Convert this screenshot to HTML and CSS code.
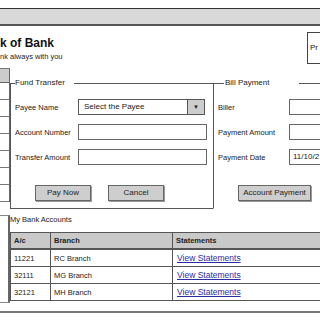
FILE: index.html
```html
<!DOCTYPE html>
<html>
<head>
<meta charset="utf-8">
<link rel="stylesheet" href="styles.css">
</head>
<body>
<div class="page">
  <div class="topbar"></div>
  <div class="header">
    <div class="brand">
      <div class="title">k of Bank</div>
      <div class="tagline">nk always with you</div>
    </div>
    <div class="probox">Pr</div>
  </div>
  <div class="main">
    <div class="sidebar">
      <div class="side-list">
        <div class="side-head"></div>
        <div class="side-row"></div>
        <div class="side-row"></div>
        <div class="side-row"></div>
        <div class="side-row"></div>
        <div class="side-row"></div>
        <div class="side-row"></div>
        <div class="side-row"></div>
      </div>
      <div class="side-box"></div>
    </div>
    <div class="content">
      <div class="forms">
        <fieldset class="panel fund">
          <legend class="legend">Fund Transfer</legend>
          <div class="rows">
            <div class="form-row">
              <span class="label">Payee Name</span>
              <div class="select"><span class="select-text">Select the Payee</span><span class="select-btn">&#9660;</span></div>
            </div>
            <div class="form-row">
              <span class="label">Account Number</span>
              <div class="input"></div>
            </div>
            <div class="form-row">
              <span class="label">Transfer Amount</span>
              <div class="input"></div>
            </div>
          </div>
          <div class="buttons">
            <div class="btn btn-pay">Pay Now</div>
            <div class="btn btn-cancel">Cancel</div>
          </div>
        </fieldset>
        <fieldset class="panel bill">
          <legend class="legend legend-bill">Bill Payment</legend>
          <div class="rows">
            <div class="form-row">
              <span class="label label-bill">Biller</span>
              <div class="input input-bill"></div>
            </div>
            <div class="form-row">
              <span class="label label-bill">Payment Amount</span>
              <div class="input input-bill"></div>
            </div>
            <div class="form-row">
              <span class="label label-bill">Payment Date</span>
              <div class="input input-bill">11/10/2</div>
            </div>
          </div>
          <div class="buttons">
            <div class="btn btn-acct">Account Payment</div>
          </div>
        </fieldset>
      </div>
      <div class="section-label">My Bank Accounts</div>
      <table class="accounts">
        <thead>
          <tr><th class="c1">A/c</th><th class="c2">Branch</th><th class="c3">Statements</th></tr>
        </thead>
        <tbody>
          <tr><td>11221</td><td>RC Branch</td><td><a class="link" href="#">View Statements</a></td></tr>
          <tr><td>32111</td><td>MG Branch</td><td><a class="link" href="#">View Statements</a></td></tr>
          <tr><td>32121</td><td>MH Branch</td><td><a class="link" href="#">View Statements</a></td></tr>
        </tbody>
      </table>
    </div>
  </div>
  <div class="footer"></div>
</div>
</body>
</html>
```

FILE: styles.css
```css
html, body {
  margin: 0;
  padding: 0;
  background: #fff;
}
body {
  width: 320px;
  height: 320px;
  overflow: hidden;
  font-family: "Liberation Sans", Arial, sans-serif;
  color: #222;
}
.page {
  width: 320px;
  overflow: hidden;
}
.topbar {
  margin-top: 8px;
  height: 15px;
  background: #d9d9d9;
  border-top: 1px solid #333;
  border-bottom: 2px solid #555;
}
.header {
  display: flex;
  justify-content: space-between;
  align-items: flex-start;
  height: 38px;
}
.brand {
  margin-top: 10px;
}
.title {
  font-size: 12px;
  line-height: 14px;
  font-weight: bold;
  color: #111;
}
.tagline {
  margin-top: 2px;
  font-size: 7.5px;
  line-height: 10px;
  color: #222;
}
.probox {
  margin-top: 6px;
  width: 10px;
  height: 30px;
  border: 1px solid #444;
  border-right: none;
  font-size: 8px;
  line-height: 30px;
  padding-left: 2px;
  overflow: hidden;
  white-space: nowrap;
}
.main {
  display: flex;
  margin-top: 4px;
}
.sidebar {
  width: 10px;
  flex: none;
}
.side-list {
  border-right: 1px solid #666;
  border-top: 1px solid #777;
}
.side-head {
  height: 13px;
  background: #cccccc;
  border-bottom: 1px solid #666;
}
.side-row {
  height: 16px;
  border-bottom: 1px solid #777;
}
.side-box {
  margin-top: 13px;
  height: 86px;
  border-top: 1px solid #888;
  border-right: 2px solid #666;
  border-bottom: 1px solid #888;
}
.content {
  flex: 1;
  min-width: 0;
}
.forms {
  display: flex;
  margin-top: 10px;
}
.panel {
  margin: 0;
  min-width: 0;
  padding: 11px 0 7px 4px;
  border: none;
  border-top: 1px solid #555;
  border-left: 1px solid #555;
}
.fund {
  width: 198px;
  flex: none;
  border-bottom: 1px solid #555;
}
.bill {
  flex: 1;
  border-bottom: 1px solid transparent;
}
.legend {
  font-size: 8px;
  line-height: 10px;
  padding: 0 9px 0 0;
  color: #222;
}
.legend-bill {
  margin-left: 6px;
  padding: 0 30px 0 1px;
}
.rows {
  display: flex;
  flex-direction: column;
  gap: 9px;
}
.form-row {
  display: flex;
  align-items: center;
  height: 16px;
}
.label {
  width: 63px;
  flex: none;
  font-size: 7.5px;
  color: #222;
}
.label-bill {
  width: 71px;
}
.input {
  width: 124px;
  height: 14px;
  border: 1px solid #666;
  background: #fff;
  font-size: 8px;
  line-height: 14px;
  padding-left: 3px;
  flex: none;
  white-space: nowrap;
  overflow: hidden;
}
.input-bill {
  flex: 1;
  width: auto;
  min-width: 0;
  border-right: none;
}
.select {
  display: flex;
  width: 125px;
  height: 14px;
  border: 1px solid #555;
  flex: none;
}
.select-text {
  flex: 1;
  font-size: 8px;
  line-height: 14px;
  padding-left: 5px;
}
.select-btn {
  width: 16px;
  background: #cdcdcd;
  border-left: 1px solid #555;
  font-size: 6px;
  line-height: 14px;
  text-align: center;
  color: #222;
}
.buttons {
  display: flex;
  gap: 17px;
  margin-top: 20px;
  margin-left: 20px;
}
.btn {
  height: 14px;
  background: #cecece;
  border: 1px solid #666;
  box-shadow: 1px 1px 0 #999;
  font-size: 8px;
  line-height: 14px;
  text-align: center;
  color: #222;
}
.btn-pay, .btn-cancel {
  width: 54px;
}
.btn-acct {
  width: 71px;
}
.section-label {
  margin-top: 6px;
  height: 10px;
  font-size: 7.5px;
  line-height: 10px;
  color: #222;
}
.accounts {
  margin-top: 7px;
  width: 310px;
  border-collapse: collapse;
  table-layout: fixed;
  border: 1px solid #555;
  border-right: none;
}
.accounts th, .accounts td {
  border: 1px solid #555;
  padding: 0 0 0 3px;
  text-align: left;
  font-size: 7.5px;
  color: #222;
  white-space: nowrap;
  overflow: hidden;
}
.accounts th:last-child, .accounts td:last-child {
  border-right: none;
}
.accounts th {
  height: 15px;
  background: #c9c9c9;
  font-weight: bold;
  border-bottom: 2px solid #555;
}
.accounts td {
  height: 16px;
}
.c1 { width: 36px; }
.c2 { width: 118px; }
.c3 { width: 150px; }
.accounts td:nth-child(3) {
  padding-left: 4px;
}
.link {
  color: #2b2ba6;
  font-size: 8.5px;
  text-decoration: underline;
}
.footer {
  margin-top: 8px;
  border-top: 2px solid #777;
}
```
